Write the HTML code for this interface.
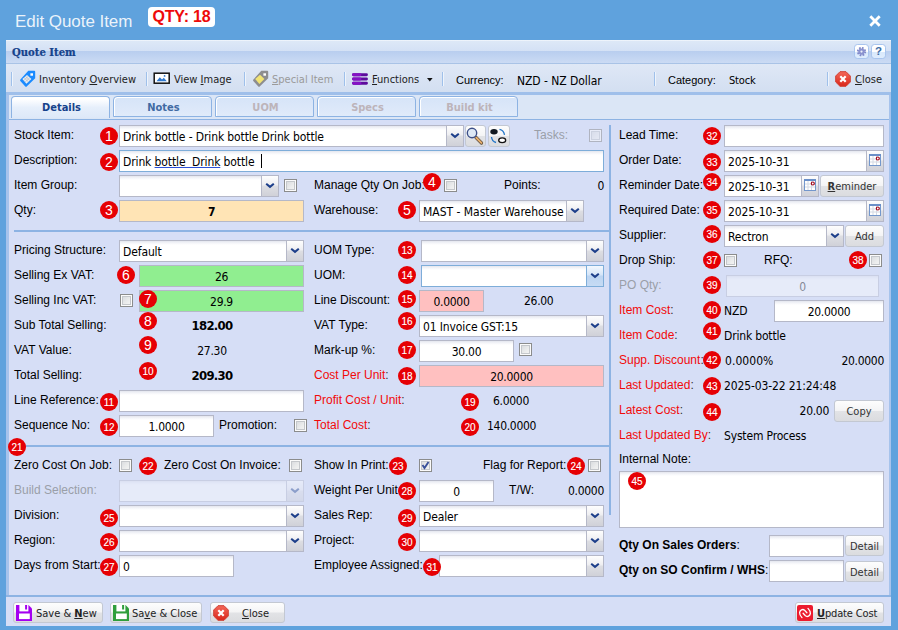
<!DOCTYPE html><html><head><meta charset="utf-8"><title>Edit Quote Item</title><style>
*{box-sizing:border-box;margin:0;padding:0}
html,body{width:898px;height:630px;overflow:hidden;background:#5fa2dd}
body{position:relative;font-family:'Liberation Sans','DejaVu Sans',sans-serif;font-size:12px;color:#000}
.a{position:absolute;white-space:nowrap}
.l{position:absolute;white-space:nowrap;font:12px 'Liberation Sans','DejaVu Sans',sans-serif;color:#000;line-height:14px;height:14px}
.l.r{color:#f20a0a}
.l.r i{font-style:normal;color:#333}
.l.d{color:#9a9fa8}
.l.b{font-weight:bold}
.t{position:absolute;white-space:nowrap;font:12px 'DejaVu Sans Condensed','DejaVu Sans','Liberation Sans',sans-serif;color:#000;line-height:14px;height:14px;letter-spacing:-.17px}
.t.num{letter-spacing:-.3px}
.i{position:absolute;height:22px;border:1px solid #b5b8c8;background:#fff linear-gradient(#e4e6ee 0,#f4f5f9 2px,#fff 4px);font:12px 'DejaVu Sans Condensed','DejaVu Sans','Liberation Sans',sans-serif;line-height:20px;padding:1px 3px 0;white-space:nowrap;overflow:hidden;color:#000;letter-spacing:-.12px}
.i.c{text-align:center;letter-spacing:-.3px}
.i.f{border-color:#7eadd9}
.i.dis{opacity:.4}
.tr{position:absolute;width:17px;height:22px;border:1px solid #b5b8c8;border-left:0;background:linear-gradient(#fefefe 0,#eeeef1 45%,#dddee3 50%,#d0d1d8 100%)}
.tr.f{border-color:#7eadd9;background:linear-gradient(#f3f8fe 0,#d5e5f8 45%,#bcd4f1 50%,#c6dbf4 100%)}
.tr svg{position:absolute;left:3px;top:6px}
.tr.dis{opacity:.4}
.n{position:absolute;z-index:5;width:18px;height:18px;border-radius:9px;background:#e60004;color:#fff;font:10px 'Liberation Sans','DejaVu Sans',sans-serif;line-height:19px;text-align:center;letter-spacing:0;-webkit-text-stroke:.12px #fff}
.n.s{font-size:14px;-webkit-text-stroke:0;line-height:18px}
.cb{position:absolute;width:13px;height:13px;border:1px solid #8b8c8c;background:linear-gradient(135deg,#d3d6da,#eceded 60%,#f7f7f7);box-shadow:inset 0 0 0 1px #fbfbfb,inset 0 0 0 2px #c4c7cb}
.cb.dis{opacity:.5}
.btn{position:absolute;height:21px;border:1px solid #c3c8d2;border-radius:3px;background:linear-gradient(#fdfdfd 0,#f4f4f5 48%,#e2e3e6 52%,#dbdcdf 100%);font:11px 'DejaVu Sans Condensed','DejaVu Sans','Liberation Sans',sans-serif;line-height:19px;text-align:center;color:#333;white-space:nowrap}
.hl{position:absolute;height:2px;background:#8db3e3}
u{text-decoration:underline}
u.sp{text-decoration-color:#2b50d8}
</style></head><body>
<div class="a" style="left:15px;top:11px;font:17px 'Liberation Sans','DejaVu Sans',sans-serif;color:rgba(255,255,255,.88);line-height:22px;letter-spacing:-.05px">Edit Quote Item</div>
<div class="a" style="left:148px;top:7px;width:67px;height:20px;background:#fff;border-radius:4px;font:bold 16px 'Liberation Sans','DejaVu Sans',sans-serif;color:#ee0a0a;line-height:20px;letter-spacing:-.15px;text-align:center">QTY: 18</div>
<svg class="a" style="left:868px;top:14px" width="14" height="14" viewBox="0 0 14 14"><path d="M2.300 2.300L11.700 11.700M11.700 2.300L2.300 11.700" stroke="#fff" stroke-width="2.800" fill="none"/></svg>
<div class="a" style="left:6px;top:40px;width:885px;height:586px;background:#a6c3ec"></div>
<div class="a" style="left:6px;top:40px;width:885px;height:24px;background:linear-gradient(#f6f9fd 0,#dde8f7 1.500px,#d4e1f5 11px,#b9ceef 11.500px,#cbdbf4 100%);border-bottom:1px solid #a9c3e6"></div>
<div class="a" style="left:12px;top:45px;-webkit-text-stroke:.2px #15428b;font:bold 11.2px 'DejaVu Serif Condensed','DejaVu Serif','Liberation Serif',serif;color:#15428b;line-height:14px">Quote Item</div>
<div class="a" style="left:854px;top:44px;width:15px;height:15px;border:1px solid #a9c5ee;border-radius:3.500px;background:linear-gradient(#fff 0,#fdfeff 50%,#d9e9fc 52%,#deecfd 100%)"></div>
<div class="a" style="left:871px;top:44px;width:15px;height:15px;border:1px solid #a9c5ee;border-radius:3.500px;background:linear-gradient(#fff 0,#fdfeff 50%,#d9e9fc 52%,#deecfd 100%);font:bold 11.500px 'Liberation Sans','DejaVu Sans',sans-serif;color:#3d6da6;text-align:center;line-height:13px">?</div>
<svg class="a" style="left:856px;top:46px" width="11" height="11" viewBox="0 0 11 11"><circle cx="5.500" cy="5.600" r="3.700" fill="none" stroke="#7f88c8" stroke-width="1.900" stroke-dasharray="1.660 1.250"/><circle cx="5.500" cy="5.600" r="3.200" fill="#8a92cf"/><circle cx="5.500" cy="5.600" r="1.100" fill="#eef2fb"/></svg>
<div class="a" style="left:6px;top:64px;width:885px;height:28px;background:linear-gradient(#dfe8f6 0,#dae4f4 40%,#d3dff1 100%)"></div>
<div class="a" style="left:11px;top:72px;width:2px;height:14px;border-left:1px solid #9fc0ea;border-right:1px solid #eef4fc"></div>
<div class="a" style="left:146px;top:72px;width:2px;height:14px;border-left:1px solid #9fc0ea;border-right:1px solid #eef4fc"></div>
<div class="a" style="left:244px;top:72px;width:2px;height:14px;border-left:1px solid #9fc0ea;border-right:1px solid #eef4fc"></div>
<div class="a" style="left:344px;top:72px;width:2px;height:14px;border-left:1px solid #9fc0ea;border-right:1px solid #eef4fc"></div>
<div class="a" style="left:442px;top:72px;width:2px;height:14px;border-left:1px solid #9fc0ea;border-right:1px solid #eef4fc"></div>
<div class="a" style="left:654px;top:72px;width:2px;height:14px;border-left:1px solid #9fc0ea;border-right:1px solid #eef4fc"></div>
<div class="a" style="left:827px;top:72px;width:2px;height:14px;border-left:1px solid #9fc0ea;border-right:1px solid #eef4fc"></div>
<div class="a" style="left:39px;top:73px;font:11px 'DejaVu Sans Condensed','DejaVu Sans','Liberation Sans',sans-serif;color:#222;line-height:14px">Inventory <u>O</u>verview</div>
<div class="a" style="left:174px;top:73px;font:11px 'DejaVu Sans Condensed','DejaVu Sans','Liberation Sans',sans-serif;color:#222;line-height:14px">View <u>I</u>mage</div>
<div class="a" style="left:272px;top:73px;font:11px 'DejaVu Sans Condensed','DejaVu Sans','Liberation Sans',sans-serif;color:#9a9a9a;line-height:14px"><u>S</u>pecial Item</div>
<div class="a" style="left:372px;top:73px;font:11px 'DejaVu Sans Condensed','DejaVu Sans','Liberation Sans',sans-serif;color:#222;line-height:14px"><u>F</u>unctions</div>
<svg class="a" style="left:427px;top:78px" width="6" height="4" viewBox="0 0 6 4"><path d="M0 0H5.600L2.800 3.400Z" fill="#111"/></svg>
<div class="l" style="left:456px;top:73px;font-size:11px">Currency:</div>
<div class="t" style="left:517px;top:74px;letter-spacing:-.05px">NZD - NZ Dollar</div>
<div class="l" style="left:668px;top:73px;font-size:11px">Category:</div>
<div class="t" style="left:729px;top:74px;font-size:11px">Stock</div>
<div class="a" style="left:855px;top:73px;font:11px 'DejaVu Sans Condensed','DejaVu Sans','Liberation Sans',sans-serif;color:#222;line-height:14px"><u>C</u>lose</div>
<svg class="a" style="left:19px;top:70px" width="18" height="18" viewBox="0 0 18 18"><path d="M9.300 .8H15.300Q16.200 .8 16.200 1.700V8.300L7.700 16.600Q7 17.200 6.300 16.500L1.300 11Q.7 10.200 1.400 9.500Z" fill="#1b8bff"/><path d="M3.400 9L8 5L12.400 9L7.400 13.700Z" fill="#e9eef5"/><path d="M5 7.600L9.600 12M6.500 6.300L11 10.600M4.800 10.400L9.300 6.300M6.200 12L10.800 7.700" stroke="#9aa3ad" stroke-width=".5"/><rect x="11.400" y="3.300" width="2.600" height="2.400" fill="#fff"/></svg>
<svg class="a" style="left:153px;top:72px" width="17" height="12" viewBox="0 0 17 12"><rect x="1.200" y="1.200" width="15" height="10" fill="#fff" stroke="#111" stroke-width="1.500"/><path d="M3.500 9.200L6.800 5.200L9 7.500L10.800 5.800L13.800 9.200Z" fill="#2f79cf"/><circle cx="11.600" cy="3.900" r=".9" fill="#2f79cf"/></svg>
<svg class="a" style="left:252px;top:70px" width="18" height="18" viewBox="0 0 18 18"><path d="M9.300 .8H15.300Q16.200 .8 16.200 1.700V8.300L7.700 16.600Q7 17.200 6.300 16.500L1.300 11Q.7 10.200 1.400 9.500Z" fill="#8d8d8f"/><path d="M3.200 9L8 4.800L12.400 9L7.400 13.900Z" fill="#f1e373"/><rect x="11.400" y="3.300" width="2.600" height="2.400" fill="#fff"/></svg>
<svg class="a" style="left:352px;top:73px" width="16" height="12" viewBox="0 0 16 12"><path d="M1.500 1.700H14.500M1.500 6H14.500M1.500 10.300H14.500" stroke="#5c0c9c" stroke-width="2.900" stroke-linecap="round"/><path d="M1.500 1.700H8M1.500 6H8M1.500 10.300H8" stroke="#8512c4" stroke-width="2.900" stroke-linecap="round"/><path d="M8 0V12" stroke="#5c0c9c" stroke-width="0"/></svg>
<svg class="a" style="left:835px;top:71px" width="16" height="16" viewBox="0 0 16 16"><defs><linearGradient id="g1" x1="0" y1="0" x2="0" y2="1"><stop offset="0" stop-color="#f4685a"/><stop offset="1" stop-color="#d9261a"/></linearGradient></defs><path d="M5 .7h6l4.300 4.300v6l-4.300 4.300H5L.7 11V5z" fill="url(#g1)" stroke="#cf4034" stroke-width="1"/><path d="M5.300 5.300l5.400 5.400M10.700 5.300l-5.400 5.400" stroke="#fff" stroke-width="2.200"/></svg>
<div class="a" style="left:6px;top:92px;width:885px;height:3px;background:#9fbfea"></div>
<div class="a" style="left:9px;top:95px;width:880px;height:25px;background:#dbe6f6;border-bottom:1px solid #8db3e3"></div>
<div class="a" style="left:11px;top:96px;width:99px;border:1px solid #8db3e3;border-radius:4px 4px 0 0;font:bold 11px 'DejaVu Sans Condensed','DejaVu Sans','Liberation Sans',sans-serif;line-height:21px;text-align:center;padding-left:2px;background:linear-gradient(#fff 0,#fff 2px,#e6effb 50%,#dde8f8 100%);color:#15428b;height:22px;border-bottom:0">Details</div>
<div class="a" style="left:113px;top:96px;width:99px;border:1px solid #8db3e3;border-radius:4px 4px 0 0;font:bold 11px 'DejaVu Sans Condensed','DejaVu Sans','Liberation Sans',sans-serif;line-height:21px;text-align:center;padding-left:2px;background:linear-gradient(#d6e4f8 0,#dbe7f9 50%,#e0ebfa 100%);box-shadow:inset 1px 1px 0 #fff;color:#416aa3;height:21px">Notes</div>
<div class="a" style="left:215px;top:96px;width:99px;border:1px solid #8db3e3;border-radius:4px 4px 0 0;font:bold 11px 'DejaVu Sans Condensed','DejaVu Sans','Liberation Sans',sans-serif;line-height:21px;text-align:center;padding-left:2px;background:linear-gradient(#d6e4f8 0,#dbe7f9 50%,#e0ebfa 100%);box-shadow:inset 1px 1px 0 #fff;color:#bdb4ba;height:21px">UOM</div>
<div class="a" style="left:317px;top:96px;width:99px;border:1px solid #8db3e3;border-radius:4px 4px 0 0;font:bold 11px 'DejaVu Sans Condensed','DejaVu Sans','Liberation Sans',sans-serif;line-height:21px;text-align:center;padding-left:2px;background:linear-gradient(#d6e4f8 0,#dbe7f9 50%,#e0ebfa 100%);box-shadow:inset 1px 1px 0 #fff;color:#bdb4ba;height:21px">Specs</div>
<div class="a" style="left:419px;top:96px;width:99px;border:1px solid #8db3e3;border-radius:4px 4px 0 0;font:bold 11px 'DejaVu Sans Condensed','DejaVu Sans','Liberation Sans',sans-serif;line-height:21px;text-align:center;padding-left:2px;background:linear-gradient(#d6e4f8 0,#dbe7f9 50%,#e0ebfa 100%);box-shadow:inset 1px 1px 0 #fff;color:#bdb4ba;height:21px">Build kit</div>
<div class="a" style="left:9px;top:120px;width:880px;height:475px;background:#d6def6"></div>
<div class="a" style="left:6px;top:595px;width:885px;height:31px;background:#d6def6;border-top:2px solid #8db3e3"></div>
<div class="hl" style="left:14px;top:230px;width:596px"></div>
<div class="hl" style="left:14px;top:445px;width:596px"></div>
<div class="a" style="left:609px;top:125px;width:2px;height:390px;background:#8db3e3"></div>
<div class="l " style="left:14px;top:128px">Stock Item:</div>
<div class="n s" style="left:100px;top:127px">1</div>
<div class="i " style="left:119px;top:125px;width:328px;">Drink bottle - Drink bottle Drink bottle</div>
<div class="tr " style="left:447px;top:125px"><svg width="10" height="7" viewBox="0 0 10 7"><path d="M1.2 1.700L5 4.800L8.800 1.700" fill="none" stroke="#1d3f8a" stroke-width="2.100"/></svg></div>
<div class="btn" style="left:465px;top:125px;width:21px;height:22px;line-height:22px"></div>
<div class="btn" style="left:488px;top:125px;width:22px;height:22px;line-height:22px"></div>
<svg class="a" style="left:465px;top:125px" width="45" height="22" viewBox="465 125 45 22"><path d="M476 137.500L481.500 143" stroke="#5a4a3a" stroke-width="3.200" stroke-linecap="round"/><path d="M476.300 137.800L481.400 142.900" stroke="#e6ae6c" stroke-width="2" stroke-linecap="round"/><circle cx="472" cy="133" r="4.700" fill="#dde8f5" stroke="#3c4f88" stroke-width="1.400"/><ellipse cx="494" cy="131.700" rx="3.700" ry="2.700" fill="#111820"/><ellipse cx="502.200" cy="140.300" rx="3.500" ry="2.400" fill="#fff" stroke="#111" stroke-width="1.300"/><path d="M499.500 129.300c2.500 .5 4.500 2.500 5 5.500" fill="none" stroke="#1f74c8" stroke-width="1.300"/><path d="M491.500 137c.3 2.800 2 4.800 4.500 5.500" fill="none" stroke="#1f74c8" stroke-width="1.300"/></svg>
<div class="l d" style="left:534px;top:128px">Tasks:</div>
<div class="cb dis" style="left:589px;top:129px"></div>
<div class="l " style="left:14px;top:153px">Description:</div>
<div class="n s" style="left:100px;top:153px">2</div>
<div class="i f" style="left:119px;top:150px;width:485px;">Drink <u class="sp">bottle&nbsp; Drink</u> bottle&nbsp; <span style="display:inline-block;width:1px;height:14px;background:#000;vertical-align:-2px"></span></div>
<div class="l " style="left:14px;top:178px">Item Group:</div>
<div class="i " style="left:119px;top:175px;width:143px;"></div>
<div class="tr " style="left:262px;top:175px"><svg width="10" height="7" viewBox="0 0 10 7"><path d="M1.2 1.700L5 4.800L8.800 1.700" fill="none" stroke="#1d3f8a" stroke-width="2.100"/></svg></div>
<div class="cb " style="left:284px;top:179px"></div>
<div class="l " style="left:314px;top:178px">Manage Qty On Job:</div>
<div class="n s" style="left:423px;top:173px">4</div>
<div class="cb " style="left:444px;top:179px"></div>
<div class="l " style="left:504px;top:178px">Points:</div>
<div class="t num" style="right:294px;top:179px;">0</div>
<div class="l " style="left:14px;top:203px">Qty:</div>
<div class="n s" style="left:100px;top:201px">3</div>
<div class="i c" style="left:119px;top:200px;width:185px;background:#ffe4b5;font-weight:bold">7</div>
<div class="l " style="left:314px;top:203px">Warehouse:</div>
<div class="n s" style="left:398px;top:201px">5</div>
<div class="i " style="left:419px;top:200px;width:148px;"><span style="letter-spacing:-.02px">MAST - Master Warehouse</span></div>
<div class="tr " style="left:567px;top:200px"><svg width="10" height="7" viewBox="0 0 10 7"><path d="M1.2 1.700L5 4.800L8.800 1.700" fill="none" stroke="#1d3f8a" stroke-width="2.100"/></svg></div>
<div class="l " style="left:14px;top:243px">Pricing Structure:</div>
<div class="i " style="left:119px;top:240px;width:168px;">Default</div>
<div class="tr " style="left:287px;top:240px"><svg width="10" height="7" viewBox="0 0 10 7"><path d="M1.2 1.700L5 4.800L8.800 1.700" fill="none" stroke="#1d3f8a" stroke-width="2.100"/></svg></div>
<div class="l " style="left:14px;top:268px">Selling Ex VAT:</div>
<div class="n s" style="left:117px;top:266px">6</div>
<div class="i c" style="left:139px;top:265px;width:165px;background:#90ee90">26</div>
<div class="l " style="left:14px;top:293px">Selling Inc VAT:</div>
<div class="cb " style="left:120px;top:294px"></div>
<div class="n s" style="left:139px;top:290px">7</div>
<div class="i c" style="left:139px;top:290px;width:165px;background:#90ee90">29.9</div>
<div class="l " style="left:14px;top:318px">Sub Total Selling:</div>
<div class="n s" style="left:139px;top:312px">8</div>
<div class="t num" style="left:162px;top:319px;font-weight:bold;font-size:13px;width:100px;text-align:center;letter-spacing:-.7px">182.00</div>
<div class="l " style="left:14px;top:343px">VAT Value:</div>
<div class="n s" style="left:139px;top:336px">9</div>
<div class="t num" style="left:162px;top:344px;width:100px;text-align:center;letter-spacing:-.3px">27.30</div>
<div class="l " style="left:14px;top:368px">Total Selling:</div>
<div class="n" style="left:139px;top:362px">10</div>
<div class="t num" style="left:162px;top:369px;font-weight:bold;font-size:13px;width:100px;text-align:center;letter-spacing:-.7px">209.30</div>
<div class="l " style="left:14px;top:393px">Line Reference:</div>
<div class="n" style="left:100px;top:393px">11</div>
<div class="i " style="left:119px;top:390px;width:185px;"></div>
<div class="l " style="left:14px;top:418px">Sequence No:</div>
<div class="n" style="left:100px;top:418px">12</div>
<div class="i c" style="left:119px;top:415px;width:95px;">1.0000</div>
<div class="l " style="left:219px;top:418px">Promotion:</div>
<div class="cb " style="left:294px;top:419px"></div>
<div class="n" style="left:8px;top:438px">21</div>
<div class="l " style="left:14px;top:458px">Zero Cost On Job:</div>
<div class="cb " style="left:119px;top:459px"></div>
<div class="n" style="left:139px;top:457px">22</div>
<div class="l " style="left:164px;top:458px">Zero Cost On Invoice:</div>
<div class="cb " style="left:289px;top:459px"></div>
<div class="l d" style="left:14px;top:483px">Build Selection:</div>
<div class="i dis" style="left:119px;top:480px;width:168px;"></div>
<div class="tr dis" style="left:287px;top:480px"><svg width="10" height="7" viewBox="0 0 10 7"><path d="M1.2 1.700L5 4.800L8.800 1.700" fill="none" stroke="#1d3f8a" stroke-width="2.100"/></svg></div>
<div class="l " style="left:14px;top:508px">Division:</div>
<div class="n" style="left:100px;top:509px">25</div>
<div class="i " style="left:119px;top:505px;width:168px;"></div>
<div class="tr " style="left:287px;top:505px"><svg width="10" height="7" viewBox="0 0 10 7"><path d="M1.2 1.700L5 4.800L8.800 1.700" fill="none" stroke="#1d3f8a" stroke-width="2.100"/></svg></div>
<div class="l " style="left:14px;top:533px">Region:</div>
<div class="n" style="left:100px;top:533px">26</div>
<div class="i " style="left:119px;top:530px;width:168px;"></div>
<div class="tr " style="left:287px;top:530px"><svg width="10" height="7" viewBox="0 0 10 7"><path d="M1.2 1.700L5 4.800L8.800 1.700" fill="none" stroke="#1d3f8a" stroke-width="2.100"/></svg></div>
<div class="l " style="left:14px;top:558px">Days from Start:</div>
<div class="n" style="left:100px;top:558px">27</div>
<div class="i " style="left:119px;top:555px;width:115px;">0</div>
<div class="l " style="left:314px;top:243px">UOM Type:</div>
<div class="n" style="left:398px;top:241px">13</div>
<div class="i " style="left:421px;top:240px;width:166px;"></div>
<div class="tr " style="left:587px;top:240px"><svg width="10" height="7" viewBox="0 0 10 7"><path d="M1.2 1.700L5 4.800L8.800 1.700" fill="none" stroke="#1d3f8a" stroke-width="2.100"/></svg></div>
<div class="l " style="left:314px;top:268px">UOM:</div>
<div class="n" style="left:398px;top:266px">14</div>
<div class="i f" style="left:421px;top:265px;width:166px;"></div>
<div class="tr f" style="left:587px;top:265px"><svg width="10" height="7" viewBox="0 0 10 7"><path d="M1.2 1.700L5 4.800L8.800 1.700" fill="none" stroke="#1d3f8a" stroke-width="2.100"/></svg></div>
<div class="l " style="left:314px;top:293px">Line Discount:</div>
<div class="n" style="left:398px;top:290px">15</div>
<div class="i c" style="left:419px;top:290px;width:65px;background:#ffc0c0">0.0000</div>
<div class="t num" style="left:524px;top:294px;">26.00</div>
<div class="l " style="left:314px;top:318px">VAT Type:</div>
<div class="n" style="left:398px;top:312px">16</div>
<div class="i " style="left:419px;top:315px;width:168px;">01 Invoice GST:15</div>
<div class="tr " style="left:587px;top:315px"><svg width="10" height="7" viewBox="0 0 10 7"><path d="M1.2 1.700L5 4.800L8.800 1.700" fill="none" stroke="#1d3f8a" stroke-width="2.100"/></svg></div>
<div class="l " style="left:314px;top:343px">Mark-up %:</div>
<div class="n" style="left:398px;top:341px">17</div>
<div class="i c" style="left:419px;top:340px;width:95px;">30.00</div>
<div class="cb " style="left:519px;top:343px"></div>
<div class="l r" style="left:314px;top:368px">Cost Per Unit<i>:</i></div>
<div class="n" style="left:398px;top:367px">18</div>
<div class="i c" style="left:419px;top:365px;width:185px;background:#ffc0c0">20.0000</div>
<div class="l r" style="left:314px;top:393px">Profit Cost / Unit<i>:</i></div>
<div class="n" style="left:461px;top:393px">19</div>
<div class="t num" style="left:493px;top:394px;">6.0000</div>
<div class="l r" style="left:314px;top:418px">Total Cost<i>:</i></div>
<div class="n" style="left:461px;top:418px">20</div>
<div class="t num" style="left:487px;top:419px;">140.0000</div>
<div class="l " style="left:314px;top:458px">Show In Print:</div>
<div class="n" style="left:389px;top:457px">23</div>
<div class="cb " style="left:419px;top:459px"><svg width="11" height="11" viewBox="0 0 11 11" style="position:absolute;left:0;top:0"><path d="M2.5 5l2 3 4-6" fill="none" stroke="#38509a" stroke-width="1.900"/></svg></div>
<div class="l " style="left:483px;top:458px">Flag for Report:</div>
<div class="n" style="left:567px;top:457px">24</div>
<div class="cb " style="left:588px;top:459px"></div>
<div class="l " style="left:314px;top:483px">Weight Per Unit</div>
<div class="n" style="left:398px;top:482px">28</div>
<div class="i c" style="left:419px;top:480px;width:75px;">0</div>
<div class="l " style="left:509px;top:483px">T/W:</div>
<div class="t num" style="right:294px;top:484px;">0.0000</div>
<div class="l " style="left:314px;top:508px">Sales Rep:</div>
<div class="n" style="left:398px;top:509px">29</div>
<div class="i " style="left:419px;top:505px;width:168px;">Dealer</div>
<div class="tr " style="left:587px;top:505px"><svg width="10" height="7" viewBox="0 0 10 7"><path d="M1.2 1.700L5 4.800L8.800 1.700" fill="none" stroke="#1d3f8a" stroke-width="2.100"/></svg></div>
<div class="l " style="left:314px;top:533px">Project:</div>
<div class="n" style="left:398px;top:533px">30</div>
<div class="i " style="left:419px;top:530px;width:168px;"></div>
<div class="tr " style="left:587px;top:530px"><svg width="10" height="7" viewBox="0 0 10 7"><path d="M1.2 1.700L5 4.800L8.800 1.700" fill="none" stroke="#1d3f8a" stroke-width="2.100"/></svg></div>
<div class="l " style="left:314px;top:558px">Employee Assigned:</div>
<div class="n" style="left:423px;top:558px">31</div>
<div class="i " style="left:439px;top:555px;width:148px;"></div>
<div class="tr " style="left:587px;top:555px"><svg width="10" height="7" viewBox="0 0 10 7"><path d="M1.2 1.700L5 4.800L8.800 1.700" fill="none" stroke="#1d3f8a" stroke-width="2.100"/></svg></div>
<div class="l " style="left:619px;top:128px">Lead Time:</div>
<div class="n" style="left:703px;top:127px">32</div>
<div class="i " style="left:724px;top:125px;width:160px;"></div>
<div class="l " style="left:619px;top:153px">Order Date:</div>
<div class="n" style="left:703px;top:153px">33</div>
<div class="i " style="left:724px;top:150px;width:143px;">2025-10-31</div>
<div class="tr" style="left:867px;top:150px"><svg style="left:2px;top:3px" width="12" height="12" viewBox="0 0 12 12"><rect x=".5" y="1" width="11" height="10.500" fill="#fff" stroke="#7397cc"/><path d="M0 1h12" stroke="#6a8fc8" stroke-width="2"/><path d="M1 5h10M1 8h10M4 2v9M7.500 2v9" stroke="#d4d9e3" stroke-width="1"/><circle cx="8.800" cy="4.500" r="1.500" fill="#fff" stroke="#a0081c" stroke-width="1.200"/></svg></div>
<div class="l " style="left:619px;top:178px">Reminder Date:</div>
<div class="n" style="left:703px;top:173px">34</div>
<div class="i " style="left:724px;top:175px;width:78px;">2025-10-31</div>
<div class="tr" style="left:802px;top:175px"><svg style="left:2px;top:3px" width="12" height="12" viewBox="0 0 12 12"><rect x=".5" y="1" width="11" height="10.500" fill="#fff" stroke="#7397cc"/><path d="M0 1h12" stroke="#6a8fc8" stroke-width="2"/><path d="M1 5h10M1 8h10M4 2v9M7.500 2v9" stroke="#d4d9e3" stroke-width="1"/><circle cx="8.800" cy="4.500" r="1.500" fill="#fff" stroke="#a0081c" stroke-width="1.200"/></svg></div>
<div class="btn" style="left:820px;top:175px;width:64px;height:22px;line-height:22px"><u><b>R</b></u>eminder</div>
<div class="l " style="left:619px;top:203px">Required Date:</div>
<div class="n" style="left:703px;top:201px">35</div>
<div class="i " style="left:724px;top:200px;width:143px;">2025-10-31</div>
<div class="tr" style="left:867px;top:200px"><svg style="left:2px;top:3px" width="12" height="12" viewBox="0 0 12 12"><rect x=".5" y="1" width="11" height="10.500" fill="#fff" stroke="#7397cc"/><path d="M0 1h12" stroke="#6a8fc8" stroke-width="2"/><path d="M1 5h10M1 8h10M4 2v9M7.500 2v9" stroke="#d4d9e3" stroke-width="1"/><circle cx="8.800" cy="4.500" r="1.500" fill="#fff" stroke="#a0081c" stroke-width="1.200"/></svg></div>
<div class="l " style="left:619px;top:228px">Supplier:</div>
<div class="n" style="left:703px;top:225px">36</div>
<div class="i " style="left:724px;top:225px;width:103px;">Rectron</div>
<div class="tr " style="left:827px;top:225px"><svg width="10" height="7" viewBox="0 0 10 7"><path d="M1.2 1.700L5 4.800L8.800 1.700" fill="none" stroke="#1d3f8a" stroke-width="2.100"/></svg></div>
<div class="btn" style="left:845px;top:225px;width:39px;height:22px;line-height:22px">Add</div>
<div class="l " style="left:619px;top:253px">Drop Ship:</div>
<div class="n" style="left:703px;top:251px">37</div>
<div class="cb " style="left:724px;top:254px"></div>
<div class="l " style="left:764px;top:253px">RFQ:</div>
<div class="n" style="left:849px;top:251px">38</div>
<div class="cb " style="left:869px;top:254px"></div>
<div class="l d" style="left:619px;top:278px">PO Qty:</div>
<div class="n" style="left:703px;top:276px">39</div>
<div class="i c dis" style="left:726px;top:275px;width:153px;">0</div>
<div class="l r" style="left:619px;top:303px">Item Cost<i>:</i></div>
<div class="n" style="left:703px;top:301px">40</div>
<div class="t" style="left:724px;top:304px;">NZD</div>
<div class="i c" style="left:774px;top:300px;width:110px;">20.0000</div>
<div class="l r" style="left:619px;top:328px">Item Code<i>:</i></div>
<div class="n" style="left:703px;top:322px">41</div>
<div class="t" style="left:724px;top:329px;">Drink bottle</div>
<div class="l r" style="left:619px;top:353px">Supp. Discount<i>:</i></div>
<div class="n" style="left:703px;top:351px">42</div>
<div class="t num" style="left:725px;top:354px;letter-spacing:.05px">0.0000%</div>
<div class="t num" style="right:14px;top:354px;">20.0000</div>
<div class="l r" style="left:619px;top:378px">Last Updated<i>:</i></div>
<div class="n" style="left:703px;top:377px">43</div>
<div class="t num" style="left:724px;top:379px;letter-spacing:-.13px">2025-03-22 21:24:48</div>
<div class="l r" style="left:619px;top:403px">Latest Cost<i>:</i></div>
<div class="n" style="left:703px;top:403px">44</div>
<div class="t num" style="right:69px;top:404px;">20.00</div>
<div class="btn" style="left:834px;top:400px;width:50px;height:22px;line-height:21px">Copy</div>
<div class="l r" style="left:619px;top:428px">Last Updated By<i>:</i></div>
<div class="t" style="left:724px;top:429px;">System Process</div>
<div class="l " style="left:619px;top:452px">Internal Note:</div>
<div class="i" style="left:619px;top:471px;width:265px;height:57px"></div>
<div class="n" style="left:628px;top:472px">45</div>
<div class="l b" style="left:619px;top:538px">Qty On Sales Orders<span style="font-weight:normal">:</span></div>
<div class="i " style="left:769px;top:535px;width:75px;"></div>
<div class="btn" style="left:845px;top:535px;width:39px;height:21px;line-height:21px">Detail</div>
<div class="l b" style="left:619px;top:563px">Qty on SO Confirm / WHS<span style="font-weight:normal">:</span></div>
<div class="i " style="left:769px;top:560px;width:75px;"></div>
<div class="btn" style="left:845px;top:561px;width:39px;height:21px;line-height:21px">Detail</div>
<div class="btn" style="left:13px;top:602px;width:90px;height:21px;line-height:21px"></div>
<div class="btn" style="left:110px;top:602px;width:92px;height:21px;line-height:21px"></div>
<div class="btn" style="left:210px;top:602px;width:75px;height:21px;line-height:21px"></div>
<div class="btn" style="left:795px;top:602px;width:89px;height:21px;line-height:21px"></div>
<div class="a" style="left:36px;top:607px;font:11px 'DejaVu Sans Condensed','DejaVu Sans','Liberation Sans',sans-serif;color:#222;line-height:14px">Save &amp; <u><b>N</b></u>ew</div>
<div class="a" style="left:132px;top:607px;font:11px 'DejaVu Sans Condensed','DejaVu Sans','Liberation Sans',sans-serif;color:#222;line-height:14px">Sa<u>v</u>e &amp; Close</div>
<div class="a" style="left:242px;top:607px;font:11px 'DejaVu Sans Condensed','DejaVu Sans','Liberation Sans',sans-serif;color:#222;line-height:14px"><u>C</u>lose</div>
<div class="a" style="left:817px;top:607px;font:11px 'DejaVu Sans Condensed','DejaVu Sans','Liberation Sans',sans-serif;color:#222;line-height:14px"><span style="letter-spacing:-.15px"><u><b>U</b></u>pdate Cost</span></div>
<svg class="a" style="left:16px;top:605px" width="16" height="16" viewBox="0 0 16 16"><path d="M0 0H12.500L16 3.500V16H0Z" fill="#a400f0"/><rect x="3" y="8.500" width="10.800" height="5.600" fill="#fff"/><rect x="3.400" y="0" width="9" height="6.400" fill="#fff"/><rect x="9.100" y="0" width="2" height="4.500" fill="#a400f0"/></svg>
<svg class="a" style="left:113px;top:605px" width="16" height="16" viewBox="0 0 16 16"><path d="M0 0H12.500L16 3.500V16H0Z" fill="#2f9e3c"/><rect x="3" y="8.500" width="10.800" height="5.600" fill="#fff"/><rect x="3.400" y="0" width="9" height="6.400" fill="#fff"/><rect x="9.100" y="0" width="2" height="4.500" fill="#2f9e3c"/></svg>
<svg class="a" style="left:213px;top:605px" width="16" height="16" viewBox="0 0 16 16"><defs><linearGradient id="g2" x1="0" y1="0" x2="0" y2="1"><stop offset="0" stop-color="#f4685a"/><stop offset="1" stop-color="#d9261a"/></linearGradient></defs><path d="M5 .7h6l4.300 4.300v6l-4.300 4.300H5L.7 11V5z" fill="url(#g2)" stroke="#cf4034" stroke-width="1"/><path d="M5.300 5.300l5.400 5.400M10.700 5.300l-5.400 5.400" stroke="#fff" stroke-width="2.200"/></svg>
<svg class="a" style="left:797px;top:605px" width="16" height="16" viewBox="0 0 16 16"><rect width="16" height="16" rx="2" fill="#ec1b2e"/><path d="M5 12.600C3.500 11 2.400 9.500 2.600 7.600C2.900 5.200 5.600 3.600 7.600 5.200L9.900 7.800M11 3.400C12.500 5 13.600 6.500 13.400 8.400C13.100 10.800 10.400 12.400 8.400 10.800L6.100 8.200" fill="none" stroke="#fff" stroke-width="1.300" stroke-linecap="round"/></svg>
</body></html>
